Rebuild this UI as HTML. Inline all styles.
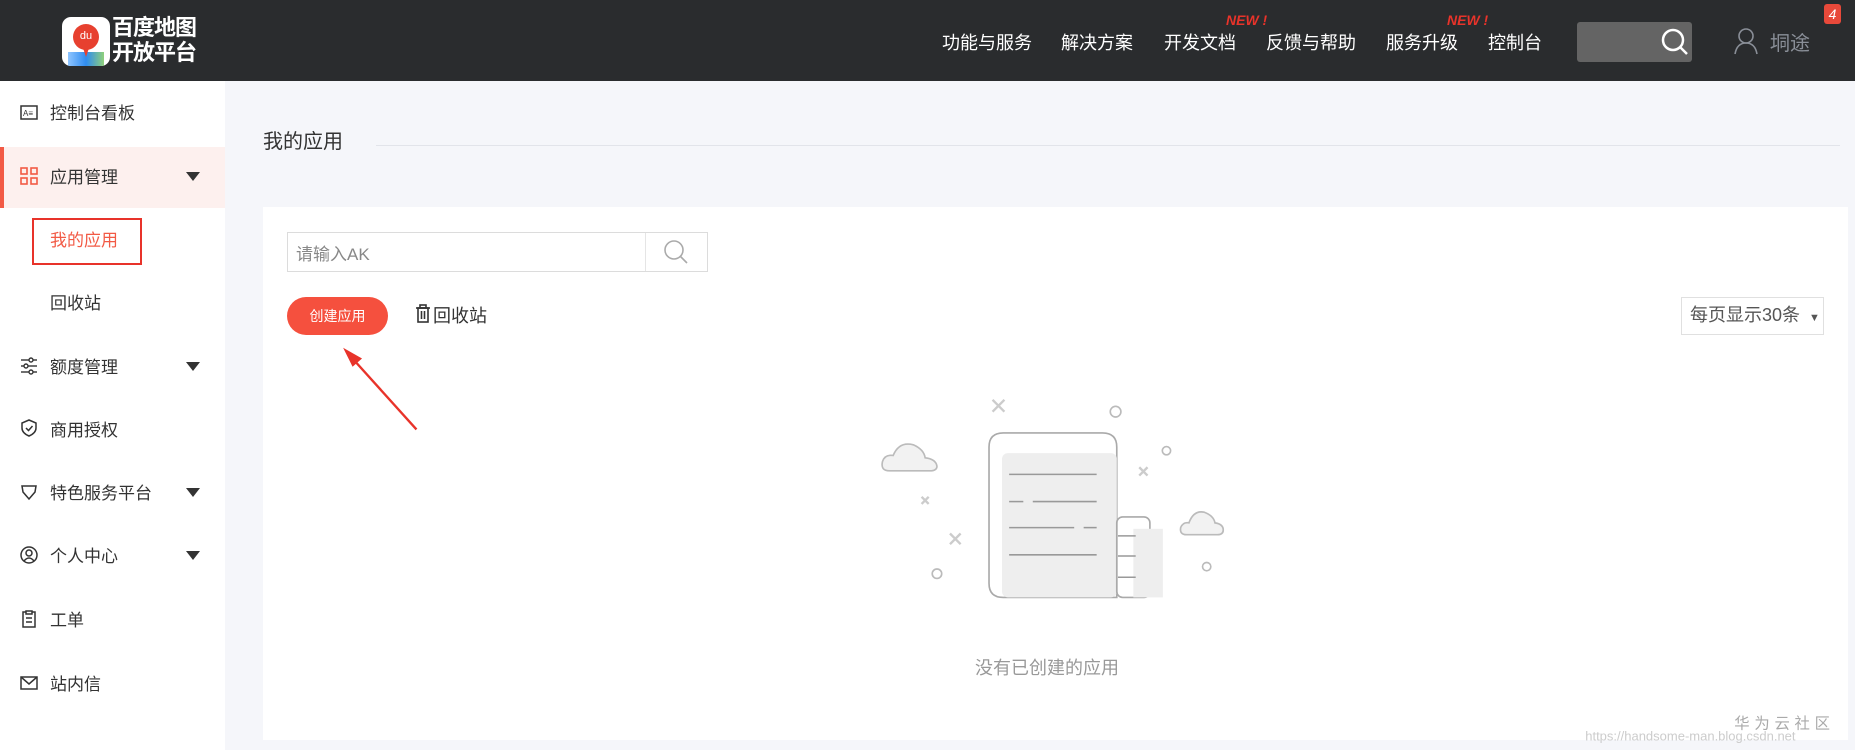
<!DOCTYPE html>
<html><head><meta charset="utf-8"><style>
*{margin:0;padding:0;box-sizing:border-box}
body{width:1855px;height:750px;overflow:hidden;background:#f5f6fa;font-family:"Liberation Sans","Noto Sans CJK SC",sans-serif;position:relative;color:#333}
.abs{position:absolute}
#hdr{left:0;top:0;width:1855px;height:81px;background:#2a2c2e}
.nav{top:29px;color:#fff;font-size:18px;white-space:nowrap}
.new{top:12px;color:#e8332a;font-size:14px;font-style:italic;font-weight:bold}
#side{left:0;top:81px;width:225px;height:669px;background:#fff}
.it{left:50px;font-size:17px;color:#333;white-space:nowrap}
.ic{left:20px;width:18px;height:18px}
.tri{left:186px;width:0;height:0;border-left:7px solid transparent;border-right:7px solid transparent;border-top:9px solid #333}
</style></head><body>
<div id="hdr" class="abs"></div>
<div class="abs" style="left:62px;top:17px;width:48px;height:49px;background:#fff;border-radius:9px;overflow:hidden">
 <div class="abs" style="left:6px;bottom:0;width:36px;height:14px;background:linear-gradient(90deg,#8fc5ff,#2f8cf0 50%,#8fd07a)"></div>
 <div class="abs" style="left:11px;top:7px;width:26px;height:26px;border-radius:50%;background:#e7402f;color:#fff;font-size:11px;text-align:center;line-height:24px">du</div>
 <div class="abs" style="left:20px;top:28px;width:0;height:0;border-left:4px solid transparent;border-right:4px solid transparent;border-top:12px solid #e7402f"></div>
</div>
<div class="abs" style="left:112px;top:15px;color:#fff;font-size:22px;font-weight:bold;line-height:25px;letter-spacing:-1px">百度地图<br>开放平台</div>
<div class="abs nav" style="left:942px">功能与服务</div>
<div class="abs nav" style="left:1061px">解决方案</div>
<div class="abs nav" style="left:1164px">开发文档</div>
<div class="abs nav" style="left:1266px">反馈与帮助</div>
<div class="abs nav" style="left:1386px">服务升级</div>
<div class="abs nav" style="left:1488px">控制台</div>
<div class="abs new" style="left:1226px">NEW !</div>
<div class="abs new" style="left:1447px">NEW !</div>
<div class="abs" style="left:1577px;top:22px;width:115px;height:40px;background:#646464;border-radius:3px"></div>
<svg class="abs" style="left:1660px;top:27px" width="30" height="30" viewBox="0 0 30 30"><circle cx="13" cy="13" r="10" fill="none" stroke="#fff" stroke-width="2.5"/><line x1="20" y1="20" x2="27" y2="27" stroke="#fff" stroke-width="2.5"/></svg>
<svg class="abs" style="left:1733px;top:27px" width="26" height="28" viewBox="0 0 26 28"><circle cx="13" cy="9" r="7" fill="none" stroke="#8a8f98" stroke-width="1.6"/><path d="M2 27 Q4 16 13 16 Q22 16 24 27" fill="none" stroke="#8a8f98" stroke-width="1.6"/></svg>
<div class="abs" style="left:1770px;top:27px;color:#8a8f98;font-size:20px">垌途</div>
<div class="abs" style="left:1824px;top:4px;width:17px;height:20px;background:#e8493a;border-radius:3px;color:#fff;font-size:14px;font-style:italic;text-align:center;line-height:20px">4</div>

<div id="side" class="abs"></div>
<div class="abs" style="left:0;top:147px;width:225px;height:61px;background:#fdf0ee;border-left:4px solid #f25a45"></div>
<svg class="abs ic" style="top:104px" viewBox="0 0 18 18"><rect x="1" y="2" width="16" height="13" fill="none" stroke="#333" stroke-width="1.5"/><text x="3" y="12" font-size="8" fill="#333">A≡</text></svg>
<div class="abs it" style="top:99px">控制台看板</div>
<svg class="abs ic" style="top:167px" viewBox="0 0 18 18" fill="none" stroke="#f25a45" stroke-width="1.6"><rect x="1" y="1" width="6" height="6"/><rect x="11" y="1" width="6" height="6"/><rect x="1" y="11" width="6" height="6"/><rect x="11" y="11" width="6" height="6"/></svg>
<div class="abs it" style="top:163px">应用管理</div><div class="abs tri" style="top:172px"></div>
<div class="abs" style="left:32px;top:218px;width:110px;height:47px;border:2px solid #e8332a"></div>
<div class="abs it" style="top:226px;color:#f25a45">我的应用</div>
<div class="abs it" style="top:289px">回收站</div>
<svg class="abs ic" style="top:357px" viewBox="0 0 18 18" fill="none" stroke="#333" stroke-width="1.4"><line x1="1" y1="3" x2="17" y2="3"/><line x1="1" y1="9" x2="17" y2="9"/><line x1="1" y1="15" x2="17" y2="15"/><circle cx="11" cy="3" r="2" fill="#fff"/><circle cx="6" cy="9" r="2" fill="#fff"/><circle cx="11" cy="15" r="2" fill="#fff"/></svg>
<div class="abs it" style="top:353px">额度管理</div><div class="abs tri" style="top:362px"></div>
<svg class="abs ic" style="top:419px" viewBox="0 0 18 18" fill="none" stroke="#333" stroke-width="1.5"><path d="M9 1 L16 4 V9 Q16 14 9 17 Q2 14 2 9 V4Z"/><path d="M6 9 L8.5 11.5 L12.5 7"/></svg>
<div class="abs it" style="top:416px">商用授权</div>
<svg class="abs ic" style="top:483px" viewBox="0 0 18 18" fill="none" stroke="#333" stroke-width="1.5"><path d="M2 3 H16 L15 9 L9 16 L3 9Z"/></svg>
<div class="abs it" style="top:479px">特色服务平台</div><div class="abs tri" style="top:488px"></div>
<svg class="abs ic" style="top:546px" viewBox="0 0 18 18" fill="none" stroke="#333" stroke-width="1.5"><circle cx="9" cy="9" r="8"/><circle cx="9" cy="7" r="3"/><path d="M4 15 Q9 9 14 15"/></svg>
<div class="abs it" style="top:542px">个人中心</div><div class="abs tri" style="top:551px"></div>
<svg class="abs ic" style="top:610px" viewBox="0 0 18 18" fill="none" stroke="#333" stroke-width="1.5"><rect x="3" y="2" width="12" height="15"/><rect x="6" y="1" width="6" height="3" fill="#fff"/><line x1="6" y1="8" x2="12" y2="8"/><line x1="6" y1="12" x2="12" y2="12"/></svg>
<div class="abs it" style="top:606px">工单</div>
<svg class="abs ic" style="top:674px" viewBox="0 0 18 18" fill="none" stroke="#333" stroke-width="1.5"><rect x="1" y="3" width="16" height="12"/><path d="M1 3 L9 10 L17 3"/></svg>
<div class="abs it" style="top:670px">站内信</div>

<div class="abs" style="left:263px;top:125px;font-size:20px;color:#333">我的应用</div>
<div class="abs" style="left:376px;top:145px;width:1464px;height:1px;background:#e2e4ea"></div>
<div class="abs" style="left:263px;top:207px;width:1585px;height:533px;background:#fff"></div>
<div class="abs" style="left:287px;top:232px;width:421px;height:40px;border:1px solid #dcdcdc"></div>
<div class="abs" style="left:645px;top:233px;width:1px;height:38px;background:#e5e5e5"></div>
<div class="abs" style="left:296px;top:240px;font-size:17px;color:#888">请输入AK</div>
<svg class="abs" style="left:663px;top:239px" width="26" height="26" viewBox="0 0 26 26"><circle cx="11" cy="11" r="9" fill="none" stroke="#aaa" stroke-width="1.6"/><line x1="17.5" y1="17.5" x2="24" y2="24" stroke="#aaa" stroke-width="1.6"/></svg>
<div class="abs" style="left:287px;top:297px;width:101px;height:38px;background:#f5503e;border-radius:19px;color:#fff;font-size:14px;text-align:center;line-height:38px">创建应用</div>
<svg class="abs" style="left:415px;top:304px" width="16" height="19" viewBox="0 0 16 19" fill="none" stroke="#333" stroke-width="1.6"><line x1="1" y1="4" x2="15" y2="4"/><rect x="5" y="1" width="6" height="3"/><rect x="3" y="4" width="10" height="14"/><line x1="6.5" y1="7" x2="6.5" y2="15"/><line x1="9.5" y1="7" x2="9.5" y2="15"/></svg>
<div class="abs" style="left:433px;top:302px;font-size:18px;color:#333">回收站</div>
<div class="abs" style="left:1681px;top:297px;width:143px;height:38px;border:1px solid #e0e0e0;font-size:18px;color:#555;line-height:34px;padding-left:8px">每页显示30条 <span style="font-size:11px;color:#555;margin-left:4px">▼</span></div>
<div class="abs" style="left:975px;top:654px;font-size:18px;color:#999">没有已创建的应用</div>

<svg class="abs" style="left:0;top:0" width="1855" height="750" viewBox="0 0 1568 634">
 <g fill="none" stroke="#bbb" stroke-width="1.4">
  <path d="M836 378 Q836 366 848 366 H932 Q944 366 944 378 V505 H848 Q836 505 836 493Z" stroke="#aaa"/>
  <rect x="847" y="383" width="97" height="122" rx="5" fill="#eee" stroke="none"/>
  <rect x="944" y="437" width="28" height="68" rx="5" stroke="#aaa"/>
  <rect x="958" y="447" width="25" height="58" fill="#eee" stroke="none"/>
  <g stroke="#999" stroke-width="1.3"><line x1="853" y1="401" x2="927" y2="401"/><line x1="853" y1="424" x2="865" y2="424"/><line x1="873" y1="424" x2="927" y2="424"/><line x1="853" y1="446" x2="908" y2="446"/><line x1="916" y1="446" x2="927" y2="446"/><line x1="853" y1="469" x2="927" y2="469"/><line x1="945" y1="453" x2="960" y2="453"/><line x1="945" y1="470" x2="960" y2="470"/><line x1="945" y1="488" x2="960" y2="488"/></g>
  <path d="M752 398 Q744 398 746 390 Q748 384 755 385 Q760 373 772 376 Q781 380 782 387 Q791 388 792 394 Q792 398 786 398Z" fill="#f2f2f2"/>
  <path d="M1003 452 Q997 452 998 446 Q1000 441 1005 442 Q1009 431 1018 433 Q1026 436 1027 442 Q1034 443 1034 448 Q1034 452 1029 452Z" fill="#f2f2f2"/>
  <circle cx="943" cy="348" r="4.5"/><circle cx="986" cy="381" r="3.5"/><circle cx="792" cy="485" r="4"/><circle cx="1020" cy="479" r="3.5"/>
  <g stroke="#ccc" stroke-width="2"><path d="M839 338 L849 348 M849 338 L839 348"/><path d="M779 420 L785 426 M785 420 L779 426"/><path d="M803 451 L812 460 M812 451 L803 460"/><path d="M963 395 L970 402 M970 395 L963 402"/></g>
 </g>
 <line x1="352" y1="363" x2="297" y2="302" stroke="#e8332a" stroke-width="2"/>
 <path d="M290 294 L306 303 L298 310Z" fill="#e8332a"/>
 <text x="1466" y="616" font-size="13" fill="#aaa" font-family="Noto Sans CJK SC" letter-spacing="4">华为云社区</text>
 <text x="1340" y="626" font-size="11" fill="#ccc" font-family="Liberation Sans">https://handsome-man.blog.csdn.net</text>
</svg>
</body></html>
